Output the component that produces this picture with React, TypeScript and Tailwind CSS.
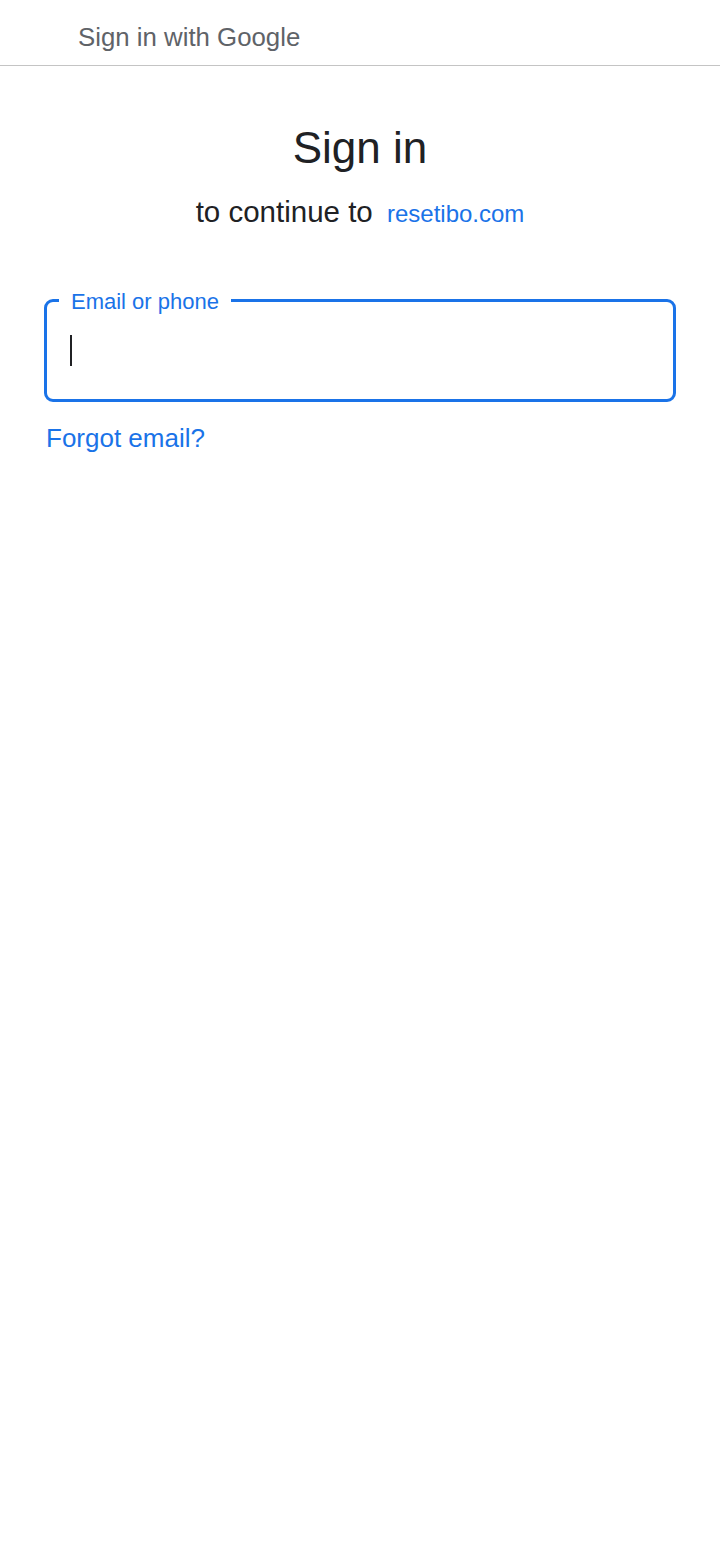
import React from "react";

export default function App() {
  return (
    <div className="min-h-[1558px] w-full bg-white font-['Liberation_Sans',Arial,sans-serif] text-[#202124]">
      <header className="box-border h-[66px] border-b border-[#c4c4c4] pl-[78px] pt-[22px]">
        <span className="block text-[25.8px] leading-[30px] text-[#5f6368]">Sign in with Google</span>
      </header>
      <main className="px-[44px]">
        <h1 className="mt-[56px] text-center text-[44px] font-normal leading-[52px] text-[#202124]">Sign in</h1>
        <p className="mt-[20px] text-center text-[29.5px] leading-[36px] text-[#202124]">
          to continue to{" "}
          <a className="ml-[6px] text-[24px] text-[#1a73e8]">resetibo.com</a>
        </p>
        <div className="relative mt-[67px] box-border flex h-[103px] w-full items-center rounded-[9px] border-[3px] border-[#1a73e8] pl-[23px]">
          <span className="absolute left-[12px] top-[-13px] bg-white px-[12px] text-[22px] leading-[26px] text-[#1a73e8]">
            Email or phone
          </span>
          <div className="h-[31px] w-[2px] bg-[#202124]" />
        </div>
        <a className="mt-[21px] block pl-[2px] text-[26px] leading-[30px] text-[#1a73e8]">Forgot email?</a>
      </main>
    </div>
  );
}
